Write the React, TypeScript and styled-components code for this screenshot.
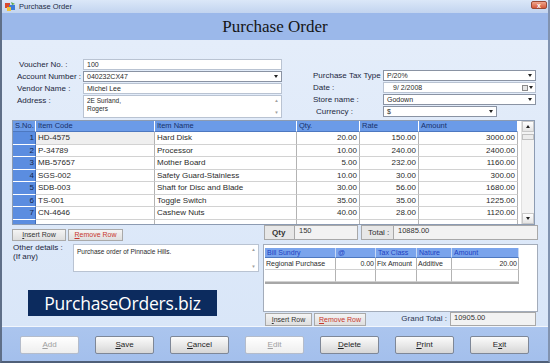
import styled, { createGlobalStyle } from "styled-components";

const GlobalStyle = createGlobalStyle`
  html, body {
    margin: 0;
    padding: 0;
    background: #ffffff;
  }
  body {
    font-family: "Liberation Sans", Arial, sans-serif;
  }
`;

const ITEMS = [
  ["1", "HD-4575", "Hard Disk", "20.00", "150.00", "3000.00"],
  ["2", "P-34789", "Processor", "10.00", "240.00", "2400.00"],
  ["3", "MB-57657", "Mother Board", "5.00", "232.00", "1160.00"],
  ["4", "SGS-002", "Safety Guard-Stainless", "10.00", "30.00", "300.00"],
  ["5", "SDB-003", "Shaft for Disc and Blade", "30.00", "56.00", "1680.00"],
  ["6", "TS-001", "Toggle Switch", "35.00", "35.00", "1225.00"],
  ["7", "CN-4646", "Cashew Nuts", "40.00", "28.00", "1120.00"],
  ["", "", "", "", "", ""],
];

const Window = styled.div`
  width: 550px;
  height: 363px;
  box-sizing: border-box;
  display: flex;
  flex-direction: column;
  overflow: hidden;
  border-left: 2px solid #5f6f88;
  border-right: 2px solid #8193b0;
  border-bottom: 2px solid #4f5f78;
  background: #dbe7f8;
`;

const TitleBar = styled.div`
  height: 13px;
  flex-shrink: 0;
  display: flex;
  align-items: center;
  gap: 3px;
  padding-left: 3px;
  background: linear-gradient(#dbe7f8, #c2d4ef);
  position: relative;
`;

const TitleText = styled.span`
  font-size: 7.5px;
  color: #1d2b45;
`;

const CloseButton = styled.div`
  position: absolute;
  right: 1px;
  top: 1px;
  width: 16px;
  height: 8px;
  border-radius: 2px;
  background: linear-gradient(#f0a58c, #d4593a);
  border: 1px solid #9a4a35;
  box-sizing: border-box;
  display: flex;
  align-items: center;
  justify-content: center;
  color: #ffffff;
  font-size: 7px;
  line-height: 1;
  font-weight: bold;
`;

const Header = styled.div`
  height: 27px;
  flex-shrink: 0;
  display: flex;
  align-items: center;
  justify-content: center;
  padding-top: 1px;
  box-sizing: border-box;
  background: #9bb8ea;
  font-family: "Liberation Serif", "DejaVu Serif", "Times New Roman", serif;
  font-size: 17px;
  font-weight: normal;
  color: #151515;
`;

const Body = styled.div`
  flex: 1;
  display: flex;
  flex-direction: column;
  padding: 19px 0 0 10px;
  background: linear-gradient(#e4edfa, #d9e6f8);
  border-bottom: 1px solid #f2f6fc;
`;

const FormSection = styled.div`
  display: flex;
  align-items: flex-start;
`;

const LeftForm = styled.div`
  margin-left: 5px;
  display: grid;
  grid-template-columns: 66px 199px;
  grid-template-rows: 11px 11px 11px 23px;
  row-gap: 1px;
`;

const RightForm = styled.div`
  margin-left: 31px;
  margin-top: 11px;
  display: grid;
  grid-template-columns: 70px 153px;
  grid-auto-rows: 11px;
  row-gap: 1px;
`;

const Label = styled.div<{ $indent?: number }>`
  font-size: 8px;
  line-height: 11px;
  color: #1c2740;
  white-space: nowrap;
  padding-left: ${(p) => p.$indent ?? 0}px;
`;

const Field = styled.div<{ $width?: number; $inset?: number }>`
  box-sizing: border-box;
  width: ${(p) => (p.$width ? `${p.$width}px` : "100%")};
  height: 100%;
  background: #ffffff;
  border: 1px solid #b9c3d2;
  display: flex;
  align-items: center;
  padding-left: ${(p) => p.$inset ?? 3}px;
  font-size: 7px;
  color: #2a2a2a;
  white-space: nowrap;
`;

const SelectField = styled(Field)`
  border-color: #8a93a3;
`;

const Arrow = styled.span<{ $flush?: boolean }>`
  margin-left: ${(p) => (p.$flush ? "0" : "auto")};
  margin-right: ${(p) => (p.$flush ? "0" : "3px")};
  width: 0;
  height: 0;
  border-left: 2.5px solid transparent;
  border-right: 2.5px solid transparent;
  border-top: 3px solid #222;
`;

const DateIcon = styled.span`
  margin-left: auto;
  margin-right: 2px;
  display: flex;
  align-items: center;
  gap: 1px;
`;

const CalBox = styled.span`
  width: 6px;
  height: 6px;
  border: 1px solid #8a8a8a;
  background: #e6e6e6;
  box-sizing: border-box;
`;

const AreaField = styled.div<{ $height: number; $width?: number }>`
  box-sizing: border-box;
  height: ${(p) => p.$height}px;
  width: ${(p) => (p.$width ? `${p.$width}px` : "auto")};
  background: #ffffff;
  border: 1px solid #b9c3d2;
  display: flex;
  font-size: 6.5px;
  color: #2a2a2a;
`;

const AreaText = styled.div<{ $top?: number }>`
  flex: 1;
  padding: ${(p) => p.$top ?? 1}px 3px 0;
  line-height: 7.5px;
`;

const AreaScroll = styled.div`
  width: 9px;
  display: flex;
  flex-direction: column;
  justify-content: space-between;
  align-items: center;
  padding: 2px 0;
  color: #a0a0a0;
  font-size: 4.5px;
  line-height: 5px;
`;

const GridWrap = styled.div`
  margin-top: 2px;
  width: 523px;
  height: 105px;
  box-sizing: border-box;
  background: #ffffff;
  border: 1px solid #8c9bb2;
  display: flex;
  overflow: hidden;
`;

const ItemGrid = styled.div`
  display: grid;
  grid-template-columns: 23px 119px 142px 63px 59px 99px;
  grid-template-rows: 11px;
  grid-auto-rows: 12.5px;
  align-content: start;
`;

const HeadCell = styled.div<{ $tint?: "strong" | "soft" }>`
  box-sizing: border-box;
  background: ${(p) => (p.$tint === "soft" ? "#7aa4ec" : "#6b9be8")};
  border-right: 1px solid ${(p) => (p.$tint === "soft" ? "#c9d9f5" : "#ffffff")};
  border-bottom: 1px solid #4d78c0;
  font-size: ${(p) => (p.$tint === "soft" ? "7px" : "7.5px")};
  line-height: 10px;
  padding-left: 2px;
  color: ${(p) => (p.$tint === "soft" ? "#1d3fc2" : "#17306a")};
  white-space: nowrap;
  overflow: hidden;
`;

const IndexCell = styled.div`
  box-sizing: border-box;
  background: #5b8de0;
  border-right: 1px solid #3f6cb8;
  border-bottom: 1px solid #ffffff;
  font-size: 8px;
  line-height: 12px;
  text-align: right;
  padding-right: 1px;
  color: #15264a;
`;

const DataCell = styled.div<{ $right?: boolean; $focus?: boolean }>`
  box-sizing: border-box;
  background: ${(p) => (p.$focus ? "#efefef" : "#ffffff")};
  border-right: 1px solid #b3b3b3;
  border-bottom: 1px solid #d2d2d2;
  font-size: 8px;
  line-height: 12px;
  padding: 0 2px;
  text-align: ${(p) => (p.$right ? "right" : "left")};
  color: #2b2b2b;
  white-space: nowrap;
  overflow: hidden;
`;

const ScrollBar = styled.div`
  margin-left: 3px;
  width: 15px;
  display: flex;
  flex-direction: column;
  background: #f3f3f3;
  border-left: 1px solid #e0e0e0;
`;

const ScrollButton = styled.div`
  height: 11px;
  box-sizing: border-box;
  border: 1px solid #c8c8c8;
  background: linear-gradient(#ffffff, #e4e4e4);
  display: flex;
  align-items: center;
  justify-content: center;
`;

const ScrollThumb = styled.div`
  margin-top: 2px;
  height: 6px;
  box-sizing: border-box;
  border: 1px solid #c0c0c0;
  background: #ececec;
`;

const ScrollSpacer = styled.div`
  flex: 1;
`;

const Tri = styled.span<{ $up?: boolean }>`
  width: 0;
  height: 0;
  border-left: 2.5px solid transparent;
  border-right: 2.5px solid transparent;
  ${(p) =>
    p.$up ? "border-bottom: 3px solid #222;" : "border-top: 3px solid #222;"}
`;

const ActionRow = styled.div`
  display: flex;
  align-items: flex-start;
  height: 17px;
`;

const SmallButton = styled.div<{ $danger?: boolean; $width: number }>`
  box-sizing: border-box;
  width: ${(p) => p.$width}px;
  height: 12px;
  margin-top: 4px;
  margin-right: 2px;
  background: linear-gradient(#f4f4f4, #dedede);
  border: 1px solid #a9a9a9;
  font-size: 7px;
  line-height: 10px;
  text-align: center;
  color: ${(p) => (p.$danger ? "#c8372d" : "#333333")};
`;

const Key = styled.span`
  text-decoration: underline;
`;

const TotalsBar = styled.div`
  margin-left: 139px;
  display: flex;
  height: 15px;
`;

const TotalLabel = styled.div<{ $width: number; $bold?: boolean }>`
  box-sizing: border-box;
  width: ${(p) => p.$width}px;
  height: 15px;
  background: #e7e7e7;
  border: 1px solid #a8a8a8;
  font-size: 8px;
  font-weight: ${(p) => (p.$bold ? "bold" : "normal")};
  line-height: 13px;
  padding-left: ${(p) => (p.$bold ? 7 : 6)}px;
  color: #333333;
`;

const TotalValue = styled.div<{ $width: number; $gap?: number }>`
  box-sizing: border-box;
  width: ${(p) => p.$width}px;
  height: 15px;
  margin-right: ${(p) => p.$gap ?? 0}px;
  background: #f2f2f2;
  border: 1px solid #a8a8a8;
  border-left: none;
  font-size: 7.5px;
  line-height: 10px;
  padding-left: 4px;
  color: #333333;
`;

const LowerSection = styled.div`
  display: flex;
  margin-top: 2px;
`;

const LowerLeft = styled.div`
  width: 251px;
  display: flex;
  flex-direction: column;
`;

const DetailsRow = styled.div`
  display: flex;
`;

const DetailsLabel = styled.div`
  width: 60px;
  padding-left: 1px;
  font-size: 8px;
  line-height: 8.5px;
  color: #1c2740;
`;

const Logo = styled.div`
  margin: 18px 0 0 16px;
  width: 189px;
  height: 26px;
  background: #0c2b5e;
  display: flex;
  align-items: center;
  justify-content: center;
  font-family: "Open Sans", "DejaVu Sans", sans-serif;
  font-size: 17.5px;
  color: #ffffff;
  letter-spacing: -0.2px;
`;

const LowerRight = styled.div`
  width: 275px;
  display: flex;
  flex-direction: column;
`;

const SundryBox = styled.div`
  box-sizing: border-box;
  height: 68px;
  background: #ffffff;
  border: 1px solid #a3acba;
  padding: 3px 0 0 1px;
`;

const SundryGrid = styled.div`
  display: grid;
  grid-template-columns: 71px 40px 41px 35px 67px;
  grid-template-rows: 10px 12px 12px;
  width: 254px;
  border-bottom: 2px solid #a7a7a7;
`;

const SundryCell = styled(DataCell)`
  font-size: 7px;
  line-height: 11px;
  padding: 0 1px;
`;

const FooterRow = styled.div`
  display: flex;
  align-items: flex-start;
  height: 14px;
  padding-left: 2px;
`;

const FooterButton = styled(SmallButton)`
  margin-top: 1px;
  height: 13px;
  line-height: 11px;
`;

const GrandLabel = styled.div`
  margin-left: auto;
  margin-right: 3px;
  font-size: 8px;
  line-height: 13px;
  color: #2a3550;
`;

const GrandValue = styled.div`
  box-sizing: border-box;
  width: 86px;
  height: 14px;
  margin-right: 2px;
  background: #f2f2f2;
  border: 1px solid #a8a8a8;
  font-size: 7.5px;
  line-height: 10px;
  padding-left: 3px;
  color: #333333;
`;

const ButtonBar = styled.div`
  height: 36px;
  flex-shrink: 0;
  display: flex;
  gap: 16px;
  padding: 9px 0 0 18px;
  box-sizing: border-box;
  background: linear-gradient(#abc5ee, #a3bfec);
`;

const ActionButton = styled.div<{ $disabled?: boolean }>`
  box-sizing: border-box;
  width: 59px;
  height: 18px;
  border: 1px solid ${(p) => (p.$disabled ? "#b4bccb" : "#7e8797")};
  border-radius: 2px;
  background: ${(p) =>
    p.$disabled
      ? "linear-gradient(#ffffff, #eeeeee)"
      : "linear-gradient(#fbfbfb, #e9e9e9 50%, #d6d6d6)"};
  font-size: 8px;
  line-height: 16px;
  text-align: center;
  color: ${(p) => (p.$disabled ? "#a0a0a0" : "#1e1e1e")};
`;

const AppIcon = () => (
  <svg width="11" height="10" viewBox="0 0 11 10">
    <rect x="0" y="1" width="5" height="5" fill="#d9492f" />
    <rect x="4" y="3" width="6" height="5" fill="#3d7bd8" />
    <rect x="2" y="5" width="4" height="4" fill="#f0c23a" />
    <path d="M6 0 L10 2 L7 3 Z" fill="#5aa84a" />
  </svg>
);

const BUTTONS: { key: string; rest: string; before?: string; disabled?: boolean }[] = [
  { key: "A", rest: "dd", disabled: true },
  { key: "S", rest: "ave" },
  { key: "C", rest: "ancel" },
  { key: "E", rest: "dit", disabled: true },
  { key: "D", rest: "elete" },
  { key: "P", rest: "rint" },
  { before: "E", key: "x", rest: "it" },
];

export default function App() {
  return (
    <>
      <GlobalStyle />
      <Window>
        <TitleBar>
          <AppIcon />
          <TitleText>Purchase Order</TitleText>
          <CloseButton>x</CloseButton>
        </TitleBar>
        <Header>Purchase Order</Header>
        <Body>
          <FormSection>
            <LeftForm>
              <Label $indent={2}>Voucher No. :</Label>
              <Field>100</Field>
              <Label>Account Number :</Label>
              <SelectField>
                040232CX47
                <Arrow />
              </SelectField>
              <Label>Vendor Name :</Label>
              <Field>Michel Lee</Field>
              <Label>Address :</Label>
              <AreaField $height={23}>
                <AreaText>
                  2E Surland,
                  <br />
                  Rogers
                </AreaText>
                <AreaScroll>
                  <span>▲</span>
                  <span>▼</span>
                </AreaScroll>
              </AreaField>
            </LeftForm>
            <RightForm>
              <Label>Purchase Tax Type</Label>
              <SelectField>
                P/20%
                <Arrow />
              </SelectField>
              <Label>Date :</Label>
              <Field $inset={9}>
                9/ 2/2008
                <DateIcon>
                  <CalBox />
                  <Arrow $flush />
                </DateIcon>
              </Field>
              <Label>Store name :</Label>
              <SelectField>
                Godown
                <Arrow />
              </SelectField>
              <Label $indent={3}>Currency :</Label>
              <SelectField $width={114}>
                $
                <Arrow />
              </SelectField>
            </RightForm>
          </FormSection>

          <GridWrap>
            <ItemGrid>
              <HeadCell>S.No.</HeadCell>
              <HeadCell>Item Code</HeadCell>
              <HeadCell>Item Name</HeadCell>
              <HeadCell>Qty.</HeadCell>
              <HeadCell>Rate</HeadCell>
              <HeadCell>Amount</HeadCell>
              {ITEMS.map((row, i) => [
                <IndexCell key={`n${i}`}>{row[0]}</IndexCell>,
                <DataCell key={`c${i}`} $focus={i === 0}>
                  {row[1]}
                </DataCell>,
                <DataCell key={`m${i}`}>{row[2]}</DataCell>,
                <DataCell key={`q${i}`} $right>
                  {row[3]}
                </DataCell>,
                <DataCell key={`r${i}`} $right>
                  {row[4]}
                </DataCell>,
                <DataCell key={`a${i}`} $right>
                  {row[5]}
                </DataCell>,
              ])}
            </ItemGrid>
            <ScrollBar>
              <ScrollButton>
                <Tri $up />
              </ScrollButton>
              <ScrollThumb />
              <ScrollSpacer />
              <ScrollButton>
                <Tri />
              </ScrollButton>
            </ScrollBar>
          </GridWrap>

          <ActionRow>
            <SmallButton $width={54}>
              <Key>I</Key>nsert Row
            </SmallButton>
            <SmallButton $width={55} $danger>
              <Key>R</Key>emove Row
            </SmallButton>
            <TotalsBar>
              <TotalLabel $width={31} $bold>
                Qty
              </TotalLabel>
              <TotalValue $width={63} $gap={3}>
                150
              </TotalValue>
              <TotalLabel $width={33}>Total :</TotalLabel>
              <TotalValue $width={144}>10885.00</TotalValue>
            </TotalsBar>
          </ActionRow>

          <LowerSection>
            <LowerLeft>
              <DetailsRow>
                <DetailsLabel>
                  Other details :
                  <br />
                  (If any)
                </DetailsLabel>
                <AreaField $height={28} $width={186}>
                  <AreaText $top={3}>Purchase order of Pinnacle Hills.</AreaText>
                  <AreaScroll>
                    <span>▲</span>
                    <span>▼</span>
                  </AreaScroll>
                </AreaField>
              </DetailsRow>
              <Logo>PurchaseOrders.biz</Logo>
            </LowerLeft>
            <LowerRight>
              <SundryBox>
                <SundryGrid>
                  <HeadCell $tint="soft">Bill Sundry</HeadCell>
                  <HeadCell $tint="soft">@</HeadCell>
                  <HeadCell $tint="soft">Tax Class</HeadCell>
                  <HeadCell $tint="soft">Nature</HeadCell>
                  <HeadCell $tint="soft">Amount</HeadCell>
                  <SundryCell>Regional Purchase</SundryCell>
                  <SundryCell $right>0.00</SundryCell>
                  <SundryCell>Fix Amount</SundryCell>
                  <SundryCell>Additive</SundryCell>
                  <SundryCell $right>20.00</SundryCell>
                  <SundryCell />
                  <SundryCell />
                  <SundryCell />
                  <SundryCell />
                  <SundryCell />
                </SundryGrid>
              </SundryBox>
              <FooterRow>
                <FooterButton $width={47}>
                  <Key>I</Key>nsert Row
                </FooterButton>
                <FooterButton $width={52} $danger>
                  <Key>R</Key>emove Row
                </FooterButton>
                <GrandLabel>Grand Total :</GrandLabel>
                <GrandValue>10905.00</GrandValue>
              </FooterRow>
            </LowerRight>
          </LowerSection>
        </Body>
        <ButtonBar>
          {BUTTONS.map((b) => (
            <ActionButton key={b.rest} $disabled={b.disabled}>
              {b.before}
              <Key>{b.key}</Key>
              {b.rest}
            </ActionButton>
          ))}
        </ButtonBar>
      </Window>
    </>
  );
}
